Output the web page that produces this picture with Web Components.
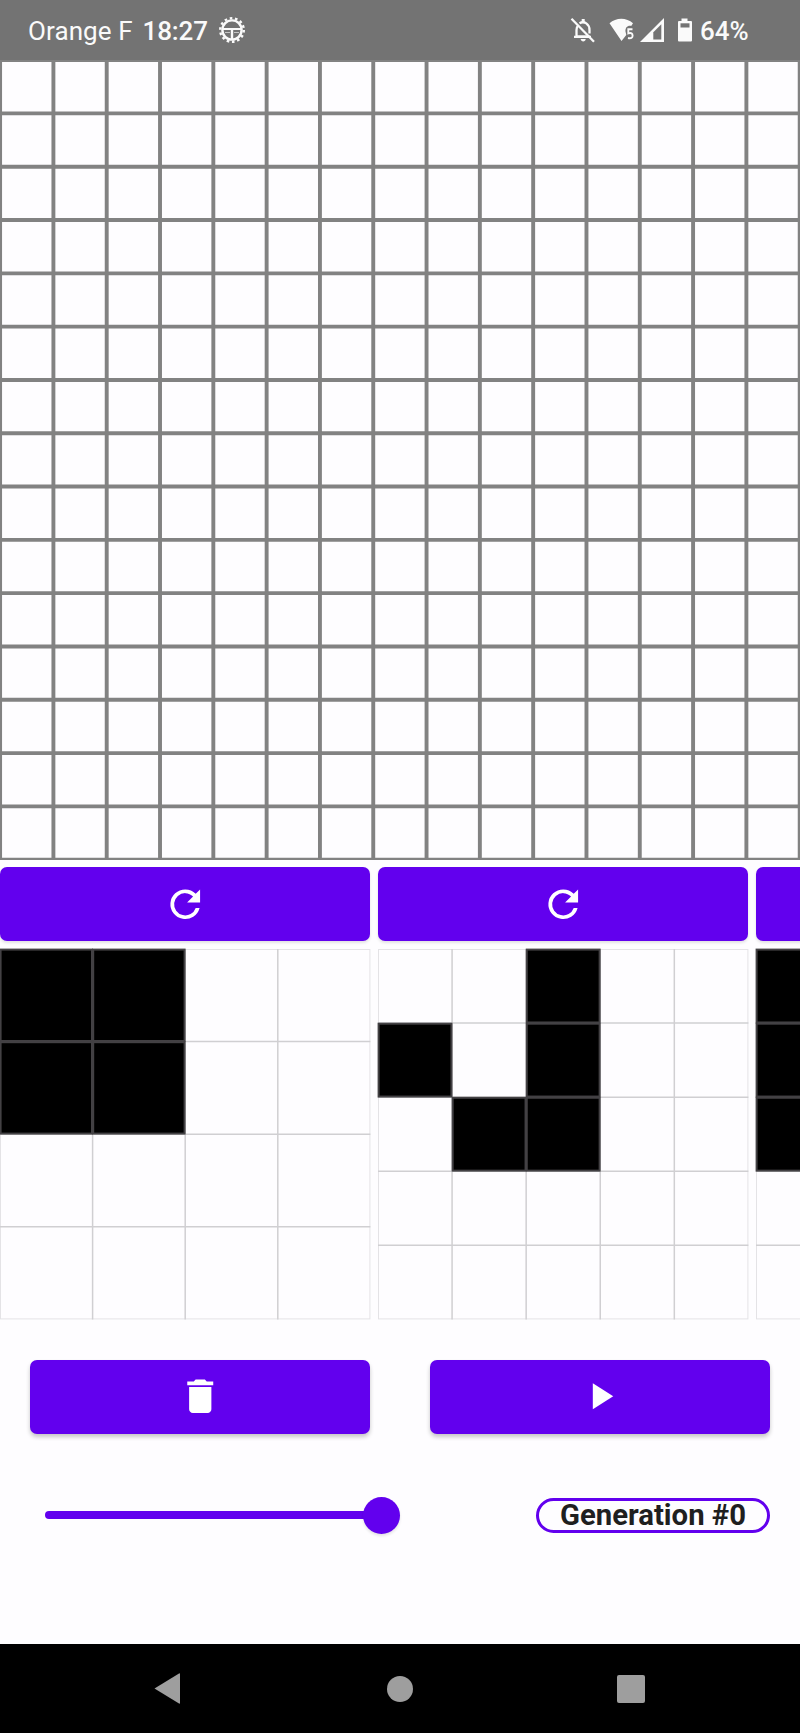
<!DOCTYPE html>
<html lang="en">
<head>
<meta charset="utf-8">
<title>Game of Life</title>
<style>
html,body{margin:0;padding:0;background:#fefdff}
body{width:800px;height:1733px;overflow:hidden;font-family:Roboto,"Noto Sans",sans-serif}
</style>
</head>
<body>
<life-app></life-app>
<script>
const sheet = (el, html) => { el.attachShadow({mode:'open'}).innerHTML = html; };

class StatusBar extends HTMLElement {
  constructor(){ super(); sheet(this, `
<style>
:host{display:flex;align-items:center;height:60px;box-sizing:border-box;padding:0 53px 0 28px;background:#737373;color:#fafafa;font-size:26px;line-height:30px;white-space:nowrap}
span{display:block;padding-top:2px}
svg{display:block;flex:none}
.carrier{width:114.500px;letter-spacing:.1px}
.time{width:75.500px;font-weight:500;letter-spacing:-.1px}
.fill{flex:1}
.pct{font-weight:500;width:47px}
</style>
<span class="carrier">Orange F</span><span class="time">18:27</span>
<svg width="28" height="28" viewBox="0 0 28 28" fill="none" stroke="#fafafa">
<circle cx="14" cy="14" r="9.600" stroke-width="2.400"/>
<circle cx="14" cy="14" r="11.800" stroke-width="2.400" stroke-dasharray="2.600 2.696"/>
<path d="M5 13h18" stroke-width="2"/><path d="M14 13v10" stroke-width="2.400"/><path d="M7 16.500h5M16 16.500h5" stroke-width="1" opacity=".6"/>
</svg>
<div class="fill"></div>
<svg width="26" height="26" viewBox="0 0 26 26" style="margin-right:13px" fill="none" stroke="#fafafa" stroke-width="2.300">
<path d="M8.300 8.200C7 9.500 6.500 11.200 6.500 13v6.500h13M9.500 6.200c4.800-2.600 10 .8 10 6.800v3.500M4 19.800h17"/>
<path d="M13.200 2v4" stroke-width="3"/><path d="M10.700 22h5c0 3.200-5 3.200-5 0z" fill="#fafafa" stroke="none"/>
<path d="M1.500 1.800l22.500 23"/>
</svg>
<svg width="26" height="26" viewBox="0 0 26 26" style="margin-right:5px">
<path d="M.5 6.300C7 .2 17.500.2 24 6.300l-1.800 2.600c-4-.6-6 2-5.700 5.600l.8 3.500-4.800 6z" fill="#fafafa"/>
<path d="M23.500 12.200h-4.200v4.200c3-1 4.300.2 4.300 2.300s-1.500 3.100-4.600 2.300" fill="none" stroke="#fafafa" stroke-width="1.900"/>
</svg>
<svg width="25" height="26" viewBox="0 0 25 26" style="margin-right:12px">
<path d="M0 25L24 1v24z" fill="#fafafa"/><path d="M13.300 15.200l8-8v15.300h-8z" fill="#737373"/>
</svg>
<svg width="16" height="26" viewBox="0 0 16 26" style="margin-right:7px">
<path d="M4.500 1.500h6V4H14q1 0 1 1v18.500q0 1-1 1H2q-1 0-1-1V5q0-1 1-1h2.500z" fill="#fafafa"/><path d="M3.500 6.300h9v4.200h-9z" fill="#737373"/>
</svg>
<span class="pct">64%</span>`); }
}
customElements.define('status-bar', StatusBar);

class LifeBoard extends HTMLElement {
  constructor(){ super();
    let d = '';
    for (let i = 0; i <= 15; i++) { const p = (i*799.600/15+.1).toFixed(2); d += `M${p} 0V800M0 ${p}H800`; }
    sheet(this, `<style>:host{display:block;height:800px;background:#fefdff}svg{display:block}</style>
<svg width="800" height="800"><path d="${d}" stroke="#828282" stroke-width="3.900"/></svg>`);
  }
}
customElements.define('life-board', LifeBoard);

const ICONS = {
  refresh:'M17.650 6.350A7.960 7.960 0 0 0 12 4a8 8 0 1 0 7.730 10h-2.080A6 6 0 1 1 12 6c1.660 0 3.140.69 4.220 1.780L13 11h7V4z',
  trash:'M6 19c0 1.100.9 2 2 2h8c1.100 0 2-.9 2-2V7H6zM19 4h-3.500l-1-1h-5l-1 1H5v2h14z',
  play:'M8 5v14l11-7z'
};
class IconButton extends HTMLElement {
  connectedCallback(){ sheet(this, `
<style>
:host{display:flex;align-items:center;justify-content:center;height:74px;border-radius:7px;background:#6200ee;box-shadow:var(--lift,0 2px 3px #0000001c)}
svg{display:block}
</style>
<svg width="44.500" height="44.500" viewBox="0 0 24 24" fill="#fff"><path d="${ICONS[this.getAttribute('icon')]}"/></svg>`); }
}
customElements.define('icon-button', IconButton);

class PatternCard extends HTMLElement {
  connectedCallback(){
    const n = +this.getAttribute('size'), s = 370.400, c = s/n;
    let light = '', black = '';
    for (let i = 1; i < n; i++) light += `M${i*c} 0V${s}M0 ${i*c}H${s}`;
    for (const cell of this.getAttribute('cells').split(' ')) {
      const [x,y] = cell.split(',').map(Number);
      black += `<rect x="${x*c+.6}" y="${y*c+.6}" width="${c-1.200}" height="${c-1.200}"/>`;
    }
    sheet(this, `
<style>
:host{display:flex;flex-direction:column;gap:8px;flex:0 0 370.400px}
svg{display:block;overflow:visible}
</style>
<icon-button icon="refresh"></icon-button>
<svg width="370.400" height="370.400"><rect x=".5" y=".5" width="${s-1}" height="${s-1}" fill="none" stroke="#e4e3e6"/>
<path d="${light}" stroke="#d0cfd2" stroke-width="1.500"/><g fill="#000" stroke="#434144" stroke-width="2">${black}</g></svg>`);
  }
}
customElements.define('pattern-card', PatternCard);

class SpeedSlider extends HTMLElement {
  constructor(){ super(); sheet(this, `
<style>
:host{display:flex;align-items:center;width:355px;height:37px}
.track{flex:1;height:7.500px;border-radius:4px 0 0 4px;background:#6200ee}
.thumb{width:37px;height:37px;margin-left:-3px;border-radius:50%;background:#6200ee;box-shadow:0 2px 3px #0000001c}
</style><div class="track"></div><div class="thumb"></div>`); }
}
customElements.define('speed-slider', SpeedSlider);

class GenerationChip extends HTMLElement {
  constructor(){ super(); sheet(this, `
<style>
:host{display:flex;align-items:center;justify-content:center;box-sizing:border-box;width:234px;height:35px;padding-top:1px;border:3px solid #6200ee;border-radius:18px;color:#1f1f1f;font-size:29.300px;font-weight:700;line-height:29px;white-space:nowrap}
</style><slot></slot>`); }
}
customElements.define('generation-chip', GenerationChip);

class NavBar extends HTMLElement {
  constructor(){ super(); sheet(this, `
<style>
:host{display:grid;grid-template-columns:334px 132px 334px;align-items:center;justify-items:center;height:89px;background:#000}
svg{display:block}
</style>
<svg width="26" height="31" viewBox="0 0 26 31" fill="#9e9e9e"><path d="M.5 15.500L25 .5q1-.5 1 .5v29q0 1-1 .5z"/></svg>
<svg width="26" height="26" fill="#9e9e9e"><circle cx="13" cy="13" r="13"/></svg>
<svg width="28" height="28" fill="#9e9e9e" style="margin-right:4px"><rect width="28" height="28" rx="2"/></svg>`); }
}
customElements.define('nav-bar', NavBar);

class LifeApp extends HTMLElement {
  constructor(){ super(); sheet(this, `
<style>
:host{display:flex;flex-direction:column;width:800px;height:1733px;overflow:hidden;background:#fefdff}
.patterns{display:flex;gap:7.500px;margin-top:7px;height:453px;overflow:hidden}
.actions{display:grid;grid-template-columns:340.400px 340.400px;gap:59.200px;margin:39.500px 30px 0}
.actions icon-button{--lift:0 3px 4px #00000038}
.controls{display:flex;align-items:center;justify-content:space-between;margin:63px 30px 0 44.500px}
nav-bar{margin-top:auto}
</style>
<status-bar></status-bar>
<life-board></life-board>
<div class="patterns">
<pattern-card size="4" cells="0,0 1,0 0,1 1,1"></pattern-card>
<pattern-card size="5" cells="2,0 0,1 2,1 1,2 2,2"></pattern-card>
<pattern-card size="5" cells="0,0 0,1 0,2"></pattern-card>
</div>
<div class="actions"><icon-button icon="trash"></icon-button><icon-button icon="play"></icon-button></div>
<div class="controls"><speed-slider></speed-slider><generation-chip>Generation #0</generation-chip></div>
<nav-bar></nav-bar>`); }
}
customElements.define('life-app', LifeApp);
</script>
</body>
</html>
